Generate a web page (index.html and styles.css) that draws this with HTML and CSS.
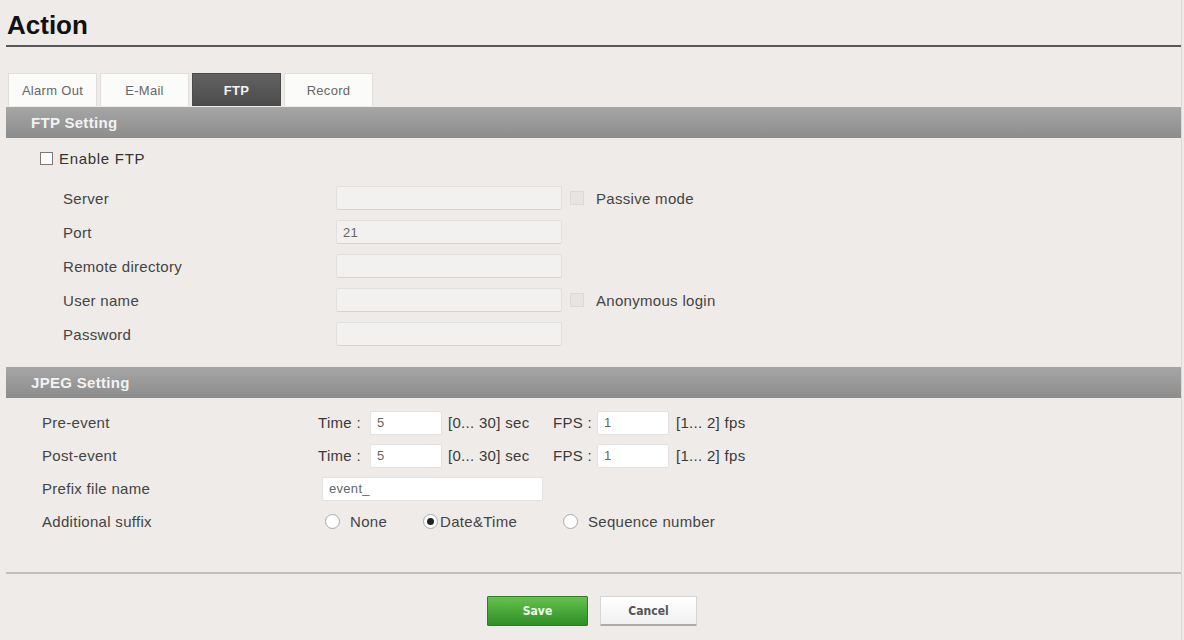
FILE: index.html
```html
<!DOCTYPE html>
<html>
<head>
<meta charset="utf-8">
<link rel="stylesheet" href="styles.css">
</head>
<body>
<div class="page">
  <h1 class="title">Action</h1>

  <div class="tabs">
    <div class="tab">Alarm Out</div>
    <div class="tab">E-Mail</div>
    <div class="tab active">FTP</div>
    <div class="tab">Record</div>
  </div>

  <div class="section-head">FTP Setting</div>
  <div class="ftp-body">
    <div class="enable-row">
      <span class="check"></span>
      <span class="enable-label">Enable FTP</span>
    </div>
    <div class="ftp-grid">
      <div class="lbl">Server</div>
      <div class="ctl"><span class="field dis"></span><span class="check dim"></span><span class="side-label">Passive mode</span></div>
      <div class="lbl">Port</div>
      <div class="ctl"><span class="field dis">21</span></div>
      <div class="lbl">Remote directory</div>
      <div class="ctl"><span class="field dis"></span></div>
      <div class="lbl">User name</div>
      <div class="ctl"><span class="field dis"></span><span class="check dim"></span><span class="side-label">Anonymous login</span></div>
      <div class="lbl">Password</div>
      <div class="ctl"><span class="field dis"></span></div>
    </div>
  </div>

  <div class="section-head">JPEG Setting</div>
  <div class="jpeg-body">
    <div class="lbl">Pre-event</div>
    <div class="ctl">
      <span class="unit-label">Time :</span><span class="field small">5</span><span class="range">[0... 30] sec</span>
      <span class="fps-label">FPS :</span><span class="field small">1</span><span class="range2">[1... 2] fps</span>
    </div>
    <div class="lbl">Post-event</div>
    <div class="ctl">
      <span class="unit-label">Time :</span><span class="field small">5</span><span class="range">[0... 30] sec</span>
      <span class="fps-label">FPS :</span><span class="field small">1</span><span class="range2">[1... 2] fps</span>
    </div>
    <div class="lbl">Prefix file name</div>
    <div class="ctl"><span class="field prefix">event_</span></div>
    <div class="lbl">Additional suffix</div>
    <div class="ctl radios">
      <span class="opt opt-none"><span class="radio"></span>None</span>
      <span class="opt opt-date"><span class="radio on"></span>Date&amp;Time</span>
      <span class="opt"><span class="radio"></span>Sequence number</span>
    </div>
  </div>

  <div class="footer">
    <button class="btn save">Save</button>
    <button class="btn cancel">Cancel</button>
  </div>
</div>
</body>
</html>
```

FILE: styles.css
```css
html, body {
  margin: 0;
  padding: 0;
  background: #eeebe8;
}
body {
  font-family: "Liberation Sans", Arial, sans-serif;
  color: #3a3a3a;
  font-size: 15px;
  letter-spacing: 0.3px;
}
.page {
  width: 1176px;
  height: 640px;
  margin-left: 6px;
  border-right: 1px solid #dcdad8;
  box-sizing: border-box;
}
.title {
  margin: 0;
  font-size: 26px;
  line-height: 30px;
  font-weight: bold;
  letter-spacing: 0;
  color: #111;
  padding: 10px 0 5px 1px;
  border-bottom: 2px solid #575757;
}
.tabs {
  display: flex;
  gap: 3px;
  margin: 26px 0 0 2px;
}
.tab {
  width: 89px;
  height: 33px;
  box-sizing: border-box;
  background: #fbfbfa;
  border: 1px solid #e0dedc;
  border-bottom: none;
  display: flex;
  align-items: center;
  justify-content: center;
  font-size: 13px;
  color: #666;
}
.tab.active {
  background: linear-gradient(#626262, #4b4b4b);
  border-color: #4b4b4b;
  color: #f4f4f4;
  font-weight: bold;
}
.section-head {
  height: 31px;
  margin-top: 1px;
  background: linear-gradient(#a6a6a6, #8c8c8c);
  color: #f2f2f2;
  font-weight: bold;
  font-size: 15px;
  line-height: 31px;
  padding-left: 25px;
}
.ftp-body {
  padding: 10px 0 15px 0;
}
.enable-row {
  height: 20px;
  display: flex;
  align-items: center;
  padding-left: 34px;
}
.enable-label {
  margin-left: 6px;
  font-size: 15px;
  letter-spacing: 0.7px;
  color: #333;
}
.check {
  display: inline-block;
  width: 13px;
  height: 13px;
  box-sizing: border-box;
  background: #fff;
  border: 1px solid #7a7a7a;
}
.check.dim {
  width: 14px;
  height: 14px;
  background: #e7e5e3;
  border-color: #dcdad8;
  margin-left: 8px;
}
.side-label {
  margin-left: 12px;
  color: #444;
}
.ftp-grid {
  margin-top: 13px;
  display: grid;
  grid-template-columns: 273px auto;
  grid-auto-rows: 34px;
  padding-left: 57px;
}
.lbl {
  display: flex;
  align-items: center;
  color: #444;
}
.ctl {
  display: flex;
  align-items: center;
}
.field {
  display: inline-flex;
  align-items: center;
  box-sizing: border-box;
  height: 24px;
  padding-left: 6px;
  font-size: 13px;
  color: #666;
  border-radius: 2px;
}
.field.dis {
  width: 226px;
  background: #f2f1ef;
  border: 1px solid #e2e0de;
  border-bottom-color: #d6d4d2;
}
.field.small {
  width: 72px;
  background: #fff;
  border: 1px solid #e4e2e0;
}
.field.prefix {
  width: 221px;
  margin-left: 4px;
  background: #fff;
  border: 1px solid #e4e2e0;
}
.jpeg-body {
  display: grid;
  grid-template-columns: 276px auto;
  grid-auto-rows: 33px;
  padding: 8px 0 34px 36px;
  border-bottom: 2px solid #c2c0be;
}
.unit-label {
  width: 52px;
}
.range {
  width: 105px;
  margin-left: 6px;
}
.fps-label {
  width: 44px;
}
.range2 {
  margin-left: 7px;
}
.radios {
  padding-left: 7px;
}
.opt {
  display: inline-flex;
  align-items: center;
  color: #444;
}
.opt-none {
  width: 98px;
}
.opt-date {
  width: 140px;
}
.radio {
  display: inline-block;
  width: 15px;
  height: 15px;
  box-sizing: border-box;
  border-radius: 50%;
  background: #fff;
  border: 1px solid #a9a9a9;
  margin-right: 10px;
  position: relative;
}
.opt-date .radio {
  margin-right: 2px;
}
.radio.on::after {
  content: "";
  position: absolute;
  left: 3px;
  top: 3px;
  width: 7px;
  height: 7px;
  border-radius: 50%;
  background: #222;
}
.footer {
  display: flex;
  justify-content: center;
  gap: 12px;
  padding-top: 22px;
  margin-left: -6px;
  width: 1184px;
}
.btn {
  height: 30px;
  font-family: "DejaVu Sans Condensed", "Liberation Sans", sans-serif;
  font-size: 12px;
  letter-spacing: 0;
  border-radius: 1px;
  padding: 0;
}
.save {
  width: 101px;
  background: linear-gradient(#66c24e, #2f8f26);
  border: 1px solid #2e7e26;
  color: #f0fff0;
  font-weight: bold;
}
.cancel {
  width: 97px;
  background: linear-gradient(#ffffff, #f1f1f1);
  border: 1px solid #d6d6d6;
  border-bottom: 2px solid #aaa;
  color: #555;
  font-weight: bold;
}
```
